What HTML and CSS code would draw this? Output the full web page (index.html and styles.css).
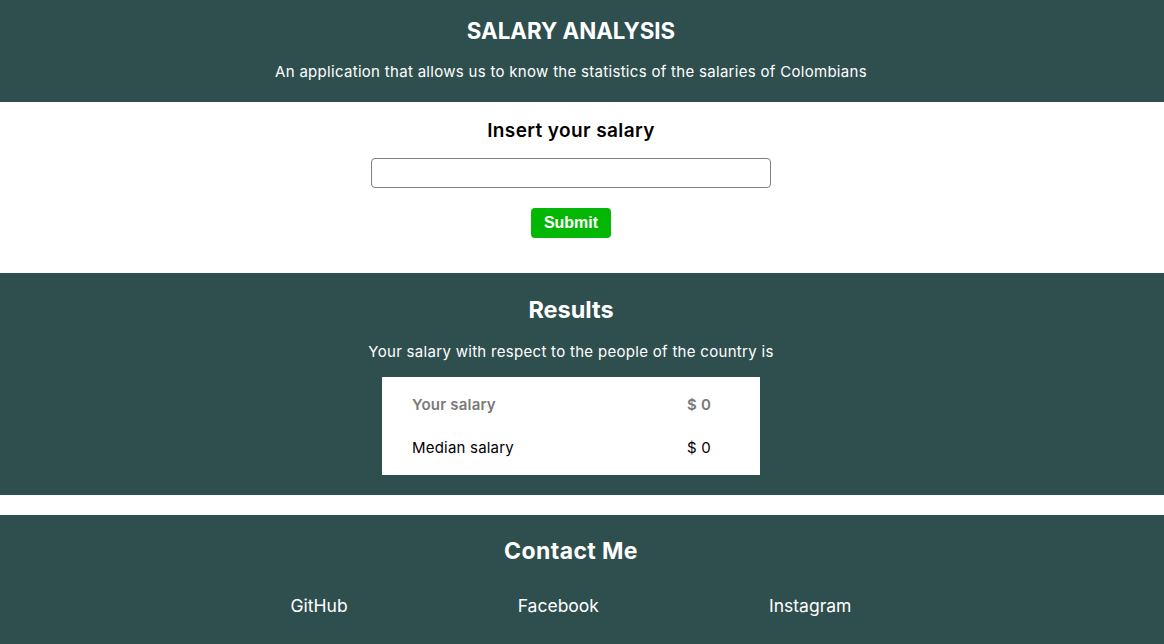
FILE: index.html
```html
<!DOCTYPE html>
<html lang="en">
<head>
<meta charset="utf-8">
<title>Salary Analysis</title>
<link rel="stylesheet" href="styles.css">
</head>
<body>
<header class="hero">
  <h1 class="hero-title">SALARY ANALYSIS</h1>
  <p class="hero-text">An application that allows us to know the statistics of the salaries of Colombians</p>
</header>
<main>
  <section class="form-section">
    <h2 class="form-title">Insert your salary</h2>
    <input class="salary-input" type="text">
    <button class="submit-btn" type="button">Submit</button>
  </section>
  <section class="results">
    <h2 class="results-title">Results</h2>
    <p class="results-text">Your salary with respect to the people of the country is</p>
    <div class="results-table">
      <div class="cell head">Your salary</div>
      <div class="cell head">$ 0</div>
      <div class="cell">Median salary</div>
      <div class="cell">$ 0</div>
    </div>
  </section>
</main>
<footer class="contact">
  <h2 class="contact-title">Contact Me</h2>
  <nav class="contact-links">
    <a class="contact-link" href="#">GitHub</a>
    <a class="contact-link" href="#">Facebook</a>
    <a class="contact-link" href="#">Instagram</a>
  </nav>
</footer>
</body>
</html>
```
FILE: styles.css
```css
* { box-sizing: border-box; }
html, body { margin: 0; padding: 0; }
body {
  font-family: Inter, "Noto Sans", sans-serif;
  background: #fff;
  color: #000;
}
.hero, .form-section, .results, .contact {
  display: flex;
  flex-direction: column;
  align-items: center;
  padding-right: 22px;
}
.hero {
  background: #2f4f4f;
  color: #fff;
  padding-top: 16px;
  padding-bottom: 20px;
}
.hero-title {
  margin: 0;
  font-size: 22.3px;
  line-height: 30px;
  font-weight: 700;
}
.hero-text {
  margin: 16px 0 0;
  font-size: 15px;
  line-height: 20px;
  letter-spacing: 0.3px;
}
.form-section {
  padding-top: 17px;
  padding-bottom: 35px;
}
.form-title {
  margin: 0;
  font-size: 19px;
  line-height: 24px;
  font-weight: 600;
  letter-spacing: 0.4px;
}
.salary-input {
  margin-top: 15px;
  width: 400px;
  height: 30px;
  border: 1px solid #808080;
  border-radius: 4px;
  font-size: 15px;
  padding: 0 6px;
}
.submit-btn {
  margin-top: 20px;
  width: 80px;
  height: 30px;
  border: none;
  border-radius: 4px;
  background: #05b705;
  color: #fff;
  font-family: "Liberation Sans", Arial, sans-serif;
  font-weight: 700;
  font-size: 16px;
  padding: 0;
}
.results {
  background: #2f4f4f;
  color: #fff;
  padding-top: 22px;
  padding-bottom: 20px;
  margin-bottom: 20px;
}
.results-title {
  margin: 0;
  font-size: 23.5px;
  line-height: 30px;
  font-weight: 700;
}
.results-text {
  margin: 17px 0 0;
  font-size: 15px;
  line-height: 20px;
  letter-spacing: 0.3px;
}
.results-table {
  margin-top: 15px;
  width: 378px;
  background: #fff;
  color: #000;
  display: grid;
  grid-template-columns: 275px auto;
  grid-auto-rows: 43px;
  align-items: center;
  padding: 6px 30px;
  font-size: 15px;
  letter-spacing: 0.2px;
}
.cell.head {
  color: #7a7a7a;
  font-weight: 600;
}
.contact {
  background: #2f4f4f;
  color: #fff;
  padding-top: 22px;
  padding-bottom: 27px;
}
.contact-title {
  margin: 0;
  font-size: 23px;
  line-height: 28px;
  font-weight: 700;
  letter-spacing: 0.4px;
}
.contact-links {
  margin-top: 30px;
  width: 731px;
  display: flex;
  justify-content: space-around;
}
.contact-link {
  color: #fff;
  text-decoration: none;
  font-size: 17.5px;
  line-height: 22px;
}
```
